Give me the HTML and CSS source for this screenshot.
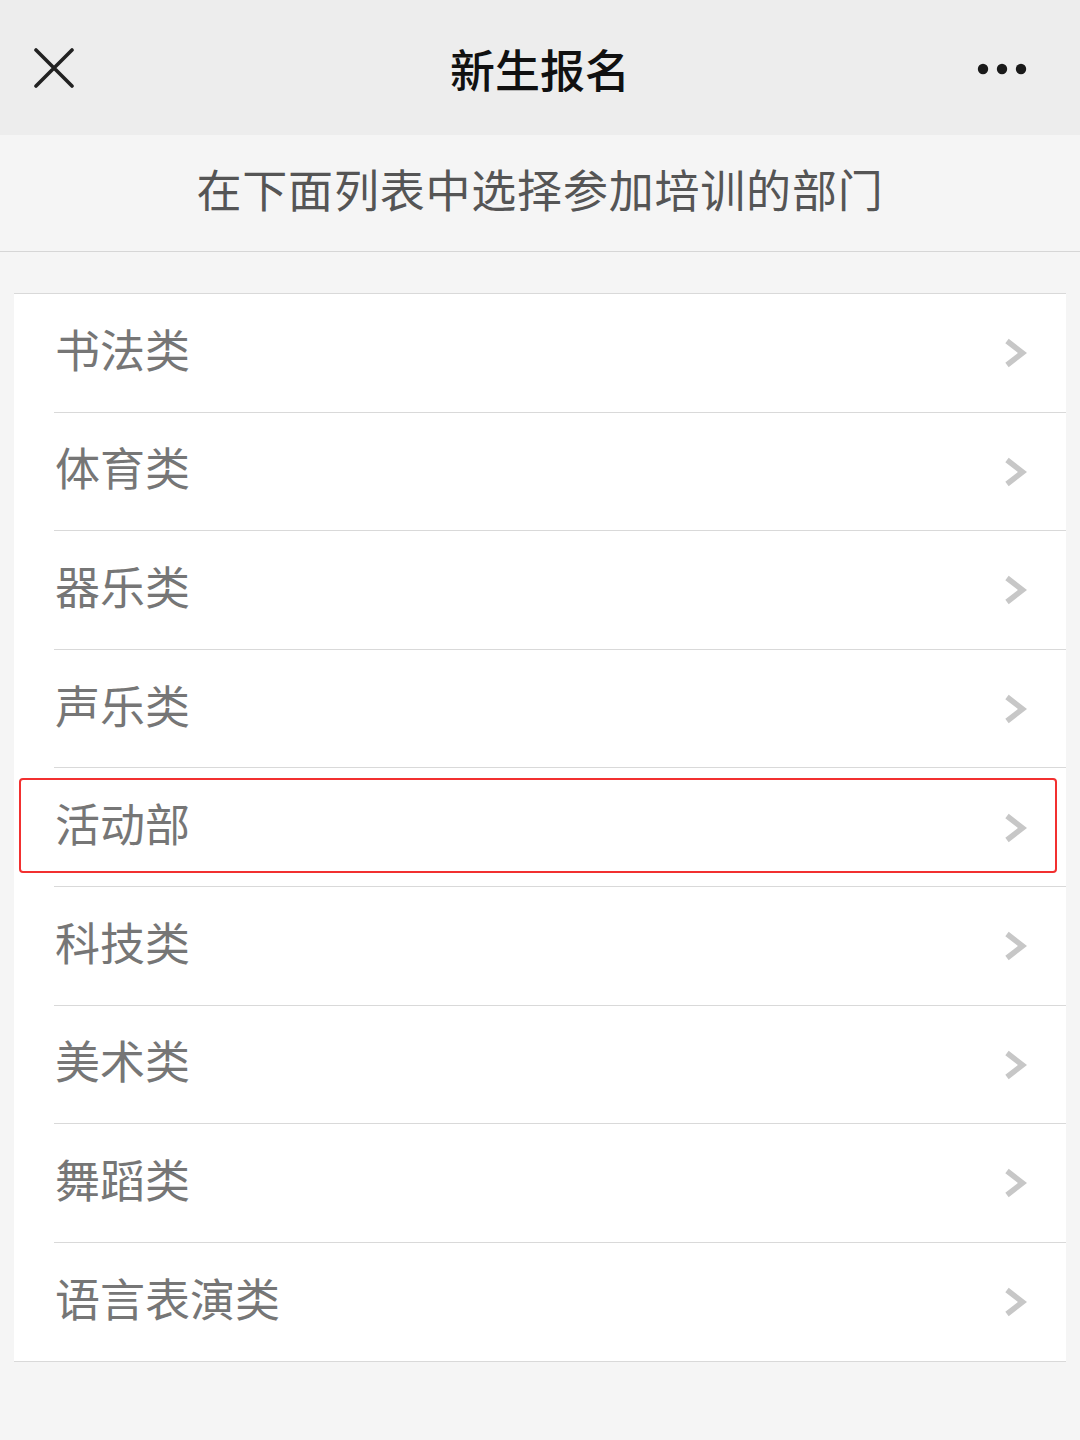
FILE: index.html
```html
<!DOCTYPE html>
<html lang="zh">
<head>
<meta charset="utf-8">
<link rel="stylesheet" href="styles.css">
</head>
<body>
<header class="topbar">
  <svg class="close" width="40" height="40" viewBox="0 0 40 40"><path d="M2 2L38 38M38 2L2 38" stroke="#222" stroke-width="3.6" stroke-linecap="round" fill="none"/></svg>
  <h1 class="title">新生报名</h1>
  <svg class="more" width="52" height="14" viewBox="0 0 52 14"><circle cx="6" cy="7" r="5.2" fill="#1a1a1a"/><circle cx="25" cy="7" r="5.2" fill="#1a1a1a"/><circle cx="44" cy="7" r="5.2" fill="#1a1a1a"/></svg>
</header>
<div class="subtitle">在下面列表中选择参加培训的部门</div>
<ul class="list">
  <li class="row"><span class="label">书法类</span><svg class="chev" width="24" height="32" viewBox="0 0 24 32"><path d="M4 4L19.5 16L4 28" stroke="#c7c7c7" stroke-width="5.5" fill="none"/></svg></li>
  <li class="row"><span class="label">体育类</span><svg class="chev" width="24" height="32" viewBox="0 0 24 32"><path d="M4 4L19.5 16L4 28" stroke="#c7c7c7" stroke-width="5.5" fill="none"/></svg></li>
  <li class="row"><span class="label">器乐类</span><svg class="chev" width="24" height="32" viewBox="0 0 24 32"><path d="M4 4L19.5 16L4 28" stroke="#c7c7c7" stroke-width="5.5" fill="none"/></svg></li>
  <li class="row"><span class="label">声乐类</span><svg class="chev" width="24" height="32" viewBox="0 0 24 32"><path d="M4 4L19.5 16L4 28" stroke="#c7c7c7" stroke-width="5.5" fill="none"/></svg></li>
  <li class="row highlighted"><span class="label">活动部</span><svg class="chev" width="24" height="32" viewBox="0 0 24 32"><path d="M4 4L19.5 16L4 28" stroke="#c7c7c7" stroke-width="5.5" fill="none"/></svg><span class="mark"></span></li>
  <li class="row"><span class="label">科技类</span><svg class="chev" width="24" height="32" viewBox="0 0 24 32"><path d="M4 4L19.5 16L4 28" stroke="#c7c7c7" stroke-width="5.5" fill="none"/></svg></li>
  <li class="row"><span class="label">美术类</span><svg class="chev" width="24" height="32" viewBox="0 0 24 32"><path d="M4 4L19.5 16L4 28" stroke="#c7c7c7" stroke-width="5.5" fill="none"/></svg></li>
  <li class="row"><span class="label">舞蹈类</span><svg class="chev" width="24" height="32" viewBox="0 0 24 32"><path d="M4 4L19.5 16L4 28" stroke="#c7c7c7" stroke-width="5.5" fill="none"/></svg></li>
  <li class="row"><span class="label">语言表演类</span><svg class="chev" width="24" height="32" viewBox="0 0 24 32"><path d="M4 4L19.5 16L4 28" stroke="#c7c7c7" stroke-width="5.5" fill="none"/></svg></li>
</ul>
</body>
</html>
```
FILE: styles.css
```css
* { box-sizing: border-box; }
html, body {
  margin: 0;
  padding: 0;
  background: #f5f5f5;
  font-family: "Noto Sans CJK SC", "Noto Sans", sans-serif;
}
.topbar {
  height: 135px;
  background: #ededed;
  display: flex;
  align-items: center;
  justify-content: space-between;
  padding: 0 51px 0 34px;
  position: relative;
}
.close { display: block; margin-top: 1px; }
.title {
  margin: 0;
  font-size: 45px;
  font-weight: 500;
  color: #111;
  position: absolute;
  left: 0;
  right: 0;
  text-align: center;
  top: 36px;
  line-height: 66px;
  pointer-events: none;
}
.more { display: block; margin-top: 3px; }
.subtitle {
  height: 117px;
  border-bottom: 1px solid #d6d6d6;
  display: flex;
  align-items: center;
  justify-content: center;
  font-size: 45px;
  color: #555;
  padding-bottom: 10px;
  letter-spacing: 0.8px;
}
.list {
  list-style: none;
  margin: 41px 14px 0 14px;
  padding: 0;
  background: #fff;
  border-top: 1px solid #d9d9d9;
  border-bottom: 1px solid #d9d9d9;
}
.row {
  height: 118.6px;
  display: flex;
  align-items: center;
  justify-content: space-between;
  padding: 0 39px 0 41px;
  position: relative;
}
.row + .row::before {
  content: "";
  position: absolute;
  top: -1px;
  left: 40px;
  right: 0;
  height: 1px;
  background: #d9d9d9;
}
.label {
  font-size: 45px;
  color: #767676;
  line-height: 1;
  margin-top: -10px;
}
.chev { display: block; margin-top: 0; }
.mark {
  position: absolute;
  left: 5px;
  right: 9px;
  top: 10px;
  bottom: 14px;
  border: 2.5px solid #f23030;
  border-radius: 4px;
}
```
